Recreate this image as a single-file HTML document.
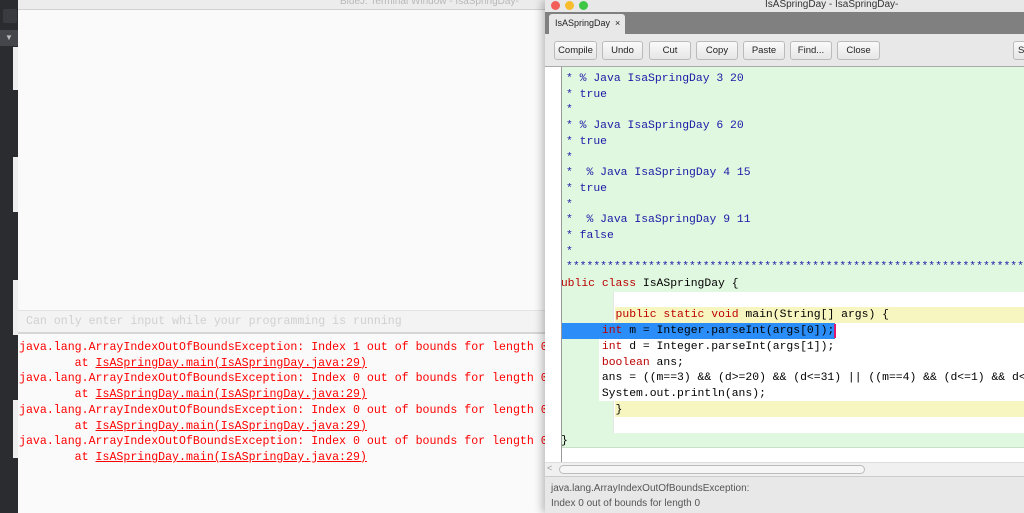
<!DOCTYPE html>
<html><head><style>
*{margin:0;padding:0;box-sizing:border-box}
body{width:1024px;height:513px;overflow:hidden;position:relative;background:#fafafa;font-family:"Liberation Sans",sans-serif}
.a{position:absolute}
.mono{font-family:"Liberation Mono",monospace;white-space:pre}
.err{font-size:11.6px;color:#f00;line-height:15.7px}
.err u{text-decoration:underline}
.code{font-size:11.4px;line-height:15.7px;color:#000}
.c{color:#1a1aa6}.k{color:#b00}
.btn{position:absolute;top:41px;height:19px;border:1px solid #bbb;border-radius:3px;background:linear-gradient(#fafafa,#e6e6e6);font-size:9.5px;text-align:center;line-height:17px;color:#222}
</style></head><body>
<div class="a" style="left:0;top:0;width:18px;height:513px;background:#2b2c30"></div>
<div class="a" style="left:3px;top:9px;width:14px;height:14px;background:#3a3b40;border-radius:2px"></div>
<div class="a" style="left:0;top:30px;width:18px;height:16px;background:#45464b;color:#bbb;font-size:8px;text-align:center;line-height:16px">▼</div>
<div class="a" style="left:13px;top:47px;width:5px;height:43px;background:#eee"></div>
<div class="a" style="left:13px;top:157px;width:5px;height:55px;background:#eee"></div>
<div class="a" style="left:13px;top:280px;width:5px;height:55px;background:#eee"></div>
<div class="a" style="left:13px;top:400px;width:5px;height:58px;background:#eee"></div>
<div class="a" style="left:18px;top:0;width:527px;height:10px;background:#ececec;border-bottom:1px solid #d0d0d0"></div>
<div class="a" style="left:340px;top:-4px;font-size:10px;color:#b8b8b8">BlueJ: Terminal Window - IsaSpringDay-</div>
<div class="a" style="left:18px;top:310px;width:527px;height:24px;background:#f3f3f3;border-top:1px solid #e4e4e4;border-bottom:2px solid #d6d6d6"></div>
<div class="a mono" style="left:26px;top:315px;font-size:11.6px;color:#d0d0d0">Can only enter input while your programming is running</div>
<div class="a mono err" style="left:19px;top:340px">java.lang.ArrayIndexOutOfBoundsException: Index 1 out of bounds for length 0
        at <u>IsASpringDay.main(IsASpringDay.java:29)</u>
java.lang.ArrayIndexOutOfBoundsException: Index 0 out of bounds for length 0
        at <u>IsASpringDay.main(IsASpringDay.java:29)</u>
java.lang.ArrayIndexOutOfBoundsException: Index 0 out of bounds for length 0
        at <u>IsASpringDay.main(IsASpringDay.java:29)</u>
java.lang.ArrayIndexOutOfBoundsException: Index 0 out of bounds for length 0
        at <u>IsASpringDay.main(IsASpringDay.java:29)</u></div>
<div class="a" style="left:545px;top:0;width:479px;height:513px;background:#e8e8e8;box-shadow:-3px 0 8px rgba(0,0,0,.25)"></div>
<div class="a" style="left:551px;top:1px;width:9px;height:9px;border-radius:50%;background:#f25f58"></div>
<div class="a" style="left:565px;top:1px;width:9px;height:9px;border-radius:50%;background:#f8bd2e"></div>
<div class="a" style="left:579px;top:1px;width:9px;height:9px;border-radius:50%;background:#3ec645"></div>
<div class="a" style="left:765px;top:-1px;font-size:10px;color:#333">IsASpringDay - IsaSpringDay-</div>
<div class="a" style="left:545px;top:12px;width:479px;height:22px;background:#808080"></div>
<div class="a" style="left:549px;top:14px;width:76px;height:20px;background:#e8e8e8;border-radius:3px 3px 0 0;font-size:9px;line-height:19px;padding-left:6px;color:#222">IsASpringDay&nbsp; ×</div>
<div class="btn" style="left:554px;width:43px">Compile</div>
<div class="btn" style="left:602px;width:41px">Undo</div>
<div class="btn" style="left:649px;width:42px">Cut</div>
<div class="btn" style="left:696px;width:42px">Copy</div>
<div class="btn" style="left:743px;width:42px">Paste</div>
<div class="btn" style="left:790px;width:42px">Find...</div>
<div class="btn" style="left:837px;width:43px">Close</div>
<div class="btn" style="left:1013px;width:20px;text-align:left;padding-left:4px">S</div>
<div class="a" style="left:545px;top:66px;width:479px;height:396px;background:#fff;border-top:1px solid #aaa"></div>
<div class="a" style="left:561px;top:67px;width:1px;height:395px;background:#999"></div>
<div class="a" style="left:562px;top:67px;width:462px;height:381px;background:#e0f7e0;border-bottom:1px solid #c8e0c8"></div>
<div class="a" style="left:613px;top:292px;width:411px;height:141px;background:#fff;border-left:1px solid #e6e6e6"></div>
<div class="a" style="left:615px;top:307px;width:409px;height:16px;background:#f8f6c0"></div>
<div class="a" style="left:599px;top:339px;width:425px;height:62px;background:#fff"></div>
<div class="a" style="left:615px;top:401px;width:409px;height:16px;background:#f8f6c0"></div>
<div class="a" style="left:562px;top:323px;width:273px;height:16px;background:#2b8ef8"></div>
<div class="a" style="left:834px;top:324px;width:2px;height:14px;background:#e0186c"></div>
<div class="a mono code" style="left:566px;top:72px"><span class="c">* % Java IsaSpringDay 3 20
* true
*
* % Java IsaSpringDay 6 20
* true
*
*  % Java IsaSpringDay 4 15
* true
*
*  % Java IsaSpringDay 9 11
* false
*
*********************************************************************</span></div>
<div class="a" style="left:562px;top:276px;width:462px;height:200px;overflow:hidden">
<div class="a mono code" style="left:-8px;top:1px"><span class="k">public class</span> IsASpringDay {

         <span class="k">public static void</span> main(String[] args) {
       <span class="k">int</span> m = Integer.parseInt(args[0]);
       <span class="k">int</span> d = Integer.parseInt(args[1]);
       <span class="k">boolean</span> ans;
       ans = ((m==3) &amp;&amp; (d&gt;=20) &amp;&amp; (d&lt;=31) || ((m==4) &amp;&amp; (d&lt;=1) &amp;&amp; d&lt;=
       System.out.println(ans);
         }</div>
<div class="a mono code" style="left:-1px;top:158px">}</div></div>
<div class="a" style="left:545px;top:462px;width:479px;height:14px;background:#f0f0f0;border-top:1px solid #ddd"></div>
<div class="a" style="left:547px;top:463px;font-size:9px;color:#999">&lt;</div>
<div class="a" style="left:559px;top:465px;width:306px;height:9px;border:1px solid #bbb;border-radius:5px;background:#f6f6f6"></div>
<div class="a" style="left:545px;top:476px;width:479px;height:37px;background:#e8e8e8;border-top:1px solid #ccc"></div>
<div class="a" style="left:551px;top:481px;font-size:10px;line-height:15px;color:#555">java.lang.ArrayIndexOutOfBoundsException:<br>Index 0 out of bounds for length 0</div>
</body></html>
